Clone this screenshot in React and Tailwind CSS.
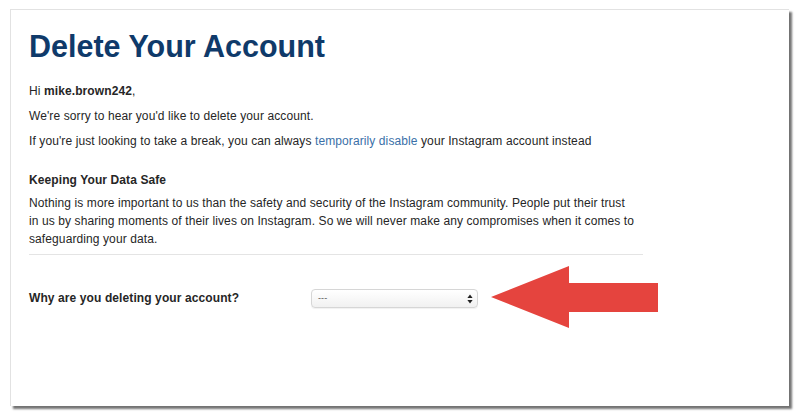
export default function App() {
  return (
    <div className="w-[800px] h-[417px] bg-white pt-[9px] pl-[10px] font-['Liberation_Sans',Arial,sans-serif]">
      <div className="w-[779px] h-[397px] bg-white border-t border-l border-[#e2e2e2] shadow-[3px_3px_2px_rgba(0,0,0,0.55)] pt-[18px] pl-[18px]">
        <h1 className="text-[30.5px] leading-[36px] font-bold text-[#0f3a6a]">Delete Your Account</h1>

        <div className="w-[614px] text-[12px] leading-[18px] tracking-[0.1px] text-[#262626]">
          <p className="mt-[18px]">
            Hi <span className="font-bold">mike.brown242</span>,
          </p>
          <p className="mt-[7px]">We&apos;re sorry to hear you&apos;d like to delete your account.</p>
          <p className="mt-[7px]">
            If you&apos;re just looking to take a break, you can always{' '}
            <span className="text-[#3a70a8]">temporarily disable</span> your Instagram account instead
          </p>

          <h2 className="mt-[21px] font-bold">Keeping Your Data Safe</h2>
          <p className="mt-[5px] w-[608px]">
            Nothing is more important to us than the safety and security of the Instagram community. People put their
            trust in us by sharing moments of their lives on Instagram. So we will never make any compromises when it
            comes to safeguarding your data.
          </p>

          <div className="mt-[6px] h-px bg-[#e4e4e4]" />

          <div className="mt-[12px] flex items-center">
            <span className="w-[282px] shrink-0 font-bold">Why are you deleting your account?</span>
            <div className="relative w-[167px] h-[19px] shrink-0 rounded-[4px] border border-[#d6d6d6] bg-gradient-to-b from-white to-[#f1f1f1] shadow-[0_1px_1px_rgba(0,0,0,0.06)] flex items-center pl-[6px] text-[9px] text-[#555]">
              ---
              <svg className="absolute right-[4px] top-[4px]" width="6" height="10" viewBox="0 0 6 10">
                <path d="M3 0.5 L5.6 4 H0.4 Z" fill="#222" />
                <path d="M3 9.5 L5.6 6 H0.4 Z" fill="#222" />
              </svg>
            </div>
            <svg className="ml-[13px] -mt-[1px] shrink-0" width="168" height="63" viewBox="0 0 168 63">
              <path d="M0 31 L78 0 V17 H167 V46 H78 V62 Z" fill="#e5443e" />
            </svg>
          </div>
        </div>
      </div>
    </div>
  )
}
